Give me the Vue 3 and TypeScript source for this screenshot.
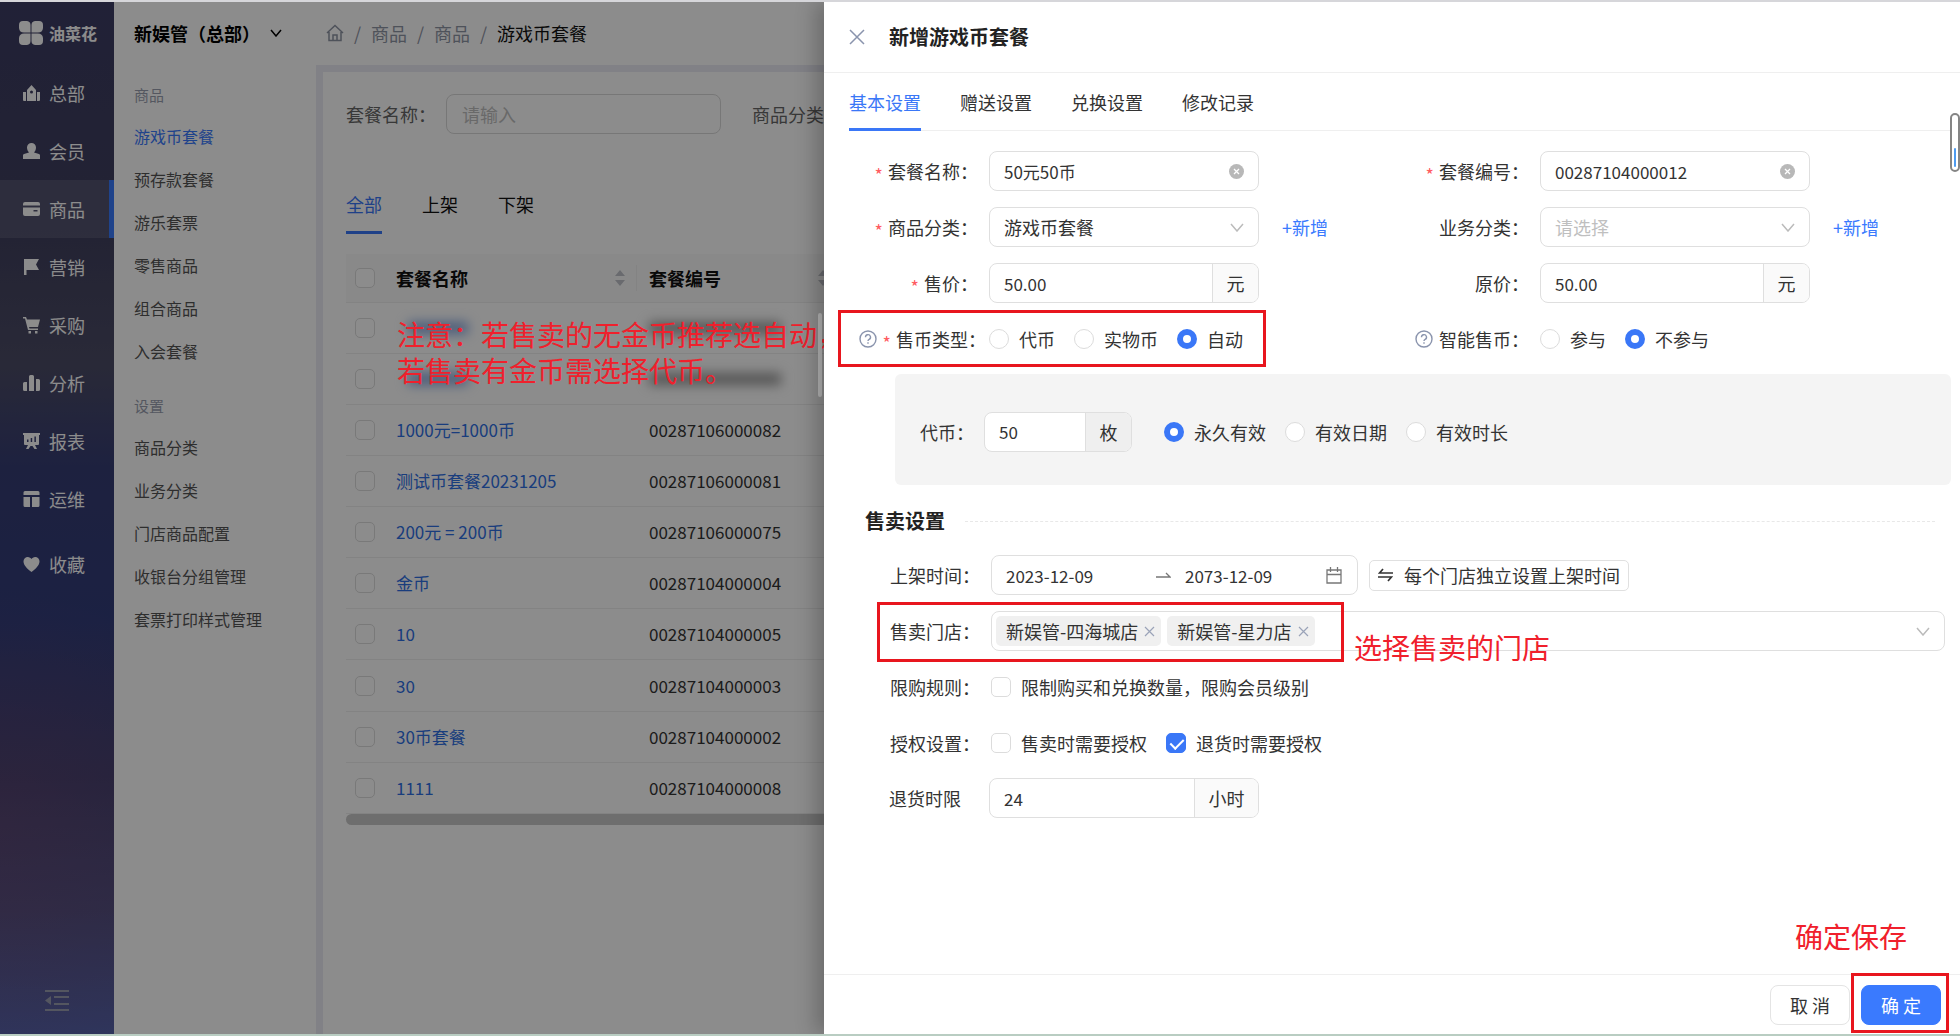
<script setup lang="ts">
import { ref } from 'vue'

interface NavItem { label: string; icon: string }
interface Row { name: string; code: string; masked?: boolean }

const nav: NavItem[] = [
  { label: '总部', icon: 'M0 7h3v9H1a1 1 0 0 1-1-1zM14 7h3v8a1 1 0 0 1-1 1h-2zM4 16V5l4.500-5L13 5v11zM8.500 5.500a1.500 1.500 0 1 0 0 3 1.500 1.500 0 0 0 0-3z' },
  { label: '会员', icon: 'M8.500 0a4.500 4.500 0 0 1 4.500 4.500c0 2-1 4-2 5L16 11a1.500 1.500 0 0 1 1 1.500V16H0v-3.500A1.500 1.500 0 0 1 1 11l5-1.500c-1-1-2-3-2-5A4.500 4.500 0 0 1 8.500 0z' },
  { label: '商品', icon: 'M2 1h13a2 2 0 0 1 2 2v1.500H0V3a2 2 0 0 1 2-2zM0 6.500h17V13a2 2 0 0 1-2 2H2a2 2 0 0 1-2-2zM10.500 9v1.500h4V9z' },
  { label: '营销', icon: 'M1 0h15l-3 5.500 3 5.500H3.500v5H1z' },
  { label: '采购', icon: 'M0 0h3l1 2.500h13L15 10H6l.5 1.500H15V13H5L2 1.500H0zM5.500 14h2.500v2.500H5.500zM12 14h2.500v2.500H12z' },
  { label: '分析', icon: 'M0 8.500a1.500 1.500 0 0 1 1.500-1.500H4v9H1.500A1.500 1.500 0 0 1 0 14.500zM6 1.500A1.500 1.500 0 0 1 7.500 0h2A1.500 1.500 0 0 1 11 1.500V16H6zM13 4h2.500A1.500 1.500 0 0 1 17 5.500v9a1.500 1.500 0 0 1-1.500 1.500H13z' },
  { label: '报表', icon: 'M0 0h17v2h-1v9a1 1 0 0 1-1 1h-3l2 4h-2.500L9.500 13h-2l-2 3H3l2-4H2a1 1 0 0 1-1-1V2H0zM4 6.500V9h1.500V6.500zM7.700 5V9h1.500V5zM11.400 3.500V9h1.500V3.500z' },
  { label: '运维', icon: 'M2 0h13a1.500 1.500 0 0 1 1.500 1.500V4H.5V1.500A1.500 1.500 0 0 1 2 0zM.5 6H7v10H2a1.500 1.500 0 0 1-1.500-1.500zM9 6h7.500v8.500A1.500 1.500 0 0 1 15 16H9z' },
  { label: '收藏', icon: 'M8.500 16C4 12.500.500 9.500.500 5.300A4.300 4.300 0 0 1 4.800 1C6.500 1 7.800 2 8.500 3 9.200 2 10.500 1 12.200 1a4.300 4.300 0 0 1 4.300 4.300C16.500 9.500 13 12.500 8.500 16z' },
]
const goodsMenu = ['游戏币套餐', '预存款套餐', '游乐套票', '零售商品', '组合商品', '入会套餐']
const settingMenu = ['商品分类', '业务分类', '门店商品配置', '收银台分组管理', '套票打印样式管理']
const rows: Row[] = [
  { name: '', code: '', masked: true },
  { name: '', code: '', masked: true },
  { name: '1000元=1000币', code: '00287106000082' },
  { name: '测试币套餐20231205', code: '00287106000081' },
  { name: '200元 = 200币', code: '00287106000075' },
  { name: '金币', code: '00287104000004' },
  { name: '10', code: '00287104000005' },
  { name: '30', code: '00287104000003' },
  { name: '30币套餐', code: '00287104000002' },
  { name: '1111', code: '00287104000008' },
]
const drawerTabs = ['基本设置', '赠送设置', '兑换设置', '修改记录']
const coinTypes = ['代币', '实物币', '自动']
const smartTypes = ['参与', '不参与']
const validTypes = ['永久有效', '有效日期', '有效时长']

const form = ref({
  name: '50元50币',
  code: '00287104000012',
  category: '游戏币套餐',
  biz: '',
  price: '50.00',
  origin: '50.00',
  coinType: '自动',
  smart: '不参与',
  coins: '50',
  valid: '永久有效',
  from: '2023-12-09',
  to: '2073-12-09',
  limit: false,
  authSell: false,
  authRefund: true,
  refundHours: '24',
})
const stores = ref(['新娱管-四海城店', '新娱管-星力店'])
function removeStore(s: string) {
  stores.value = stores.value.filter((x) => x !== s)
}
</script>

<template>
  <div class="app">
    <nav class="side">
      <div class="logo">
        <svg width="24" height="24" viewBox="0 0 24 24" fill="#fff">
          <path d="M4 0h4a4 4 0 0 1 3.500 4v7.500H5A5 5 0 0 1 0 7V4a4 4 0 0 1 4-4z" />
          <path d="M16 0h4a4 4 0 0 1 4 4v3a5 5 0 0 1-5 4.500h-6.500V4A4 4 0 0 1 16 0z" />
          <path d="M5 12.500h6.500V20A4 4 0 0 1 8 24H4a4 4 0 0 1-4-4v-3a5 5 0 0 1 5-4.500z" />
          <path d="M12.500 12.500H19a5 5 0 0 1 5 4.500v3a4 4 0 0 1-4 4h-4a4 4 0 0 1-3.500-4z" />
        </svg>
        <span>油菜花</span>
      </div>
      <a v-for="n in nav" :key="n.label" href="#" class="nav" :class="{ on: n.label === '商品', fav: n.label === '收藏' }">
        <svg width="17" height="17" viewBox="0 0 17 17" fill="#fff" fill-rule="evenodd"><path :d="n.icon" /></svg>
        {{ n.label }}
      </a>
      <button class="fold" aria-label="收起菜单">
        <svg width="24" height="22" viewBox="0 0 24 22" fill="#9a9db0"><path d="M0 0h24v2H0zM9 6h15v2H9zM9 13h15v2H9zM0 19h24v2H0zM6 6v9l-6-4.500z" /></svg>
      </button>
    </nav>

    <aside class="sub">
      <button class="org">新娱管（总部）
        <svg width="12" height="8" viewBox="0 0 12 8" fill="none" stroke="#000" stroke-width="1.500"><path d="M1 1l5 6 5-6" /></svg>
      </button>
      <h3>商品</h3>
      <a v-for="(m, i) in goodsMenu" :key="m" href="#" :class="{ on: i === 0 }">{{ m }}</a>
      <h3 class="later">设置</h3>
      <a v-for="m in settingMenu" :key="m" href="#">{{ m }}</a>
    </aside>

    <main class="main">
      <header class="crumbs">
        <svg width="18" height="18" viewBox="0 0 18 18" fill="none" stroke="#8f95a5" stroke-width="1.500"><path d="M1 9l8-7.500L17 9M3 8v8.500h12V8M7 16v-5h4v5" /></svg>
        <i>/</i><a href="#">商品</a><i>/</i><a href="#">商品</a><i>/</i><b>游戏币套餐</b>
      </header>
      <section class="content">
        <div class="search">
          <label for="q">套餐名称：</label>
          <input id="q" type="text" placeholder="请输入" />
          <span class="cat">商品分类：</span>
        </div>
        <div class="tabs list-tabs">
          <button class="on">全部</button><button>上架</button><button>下架</button>
        </div>
        <table>
          <thead>
            <tr>
              <th class="c0"><input type="checkbox" aria-label="全选" /></th>
              <th class="c1"><div>套餐名称<svg width="10" height="16" viewBox="0 0 10 16" fill="#bfc2c9"><path d="M5 0l5 6H0zM5 16l5-6H0z" /></svg></div></th>
              <th class="c2"><div>套餐编号<svg width="10" height="16" viewBox="0 0 10 16" fill="#bfc2c9"><path d="M5 0l5 6H0zM5 16l5-6H0z" /></svg></div></th>
            </tr>
          </thead>
          <tbody>
            <tr v-for="(r, i) in rows" :key="i">
              <td class="c0"><input type="checkbox" aria-label="选择" /></td>
              <td class="c1"><span v-if="r.masked" class="smudge blue"></span><a v-else href="#">{{ r.name }}</a></td>
              <td class="c2"><span v-if="r.masked" class="smudge dark"></span><template v-else>{{ r.code }}</template></td>
            </tr>
          </tbody>
        </table>
        <div class="hbar"></div>
      </section>
    </main>

    <div class="mask"></div>
    <p class="note note-list">注意：若售卖的无金币推荐选自动，<br />若售卖有金币需选择代币。</p>
    <div class="vbar"></div>

    <section class="drawer" role="dialog" aria-labelledby="dt">
      <header class="dhead">
        <button class="close" aria-label="关闭">
          <svg width="16" height="16" viewBox="0 0 16 16" fill="none" stroke="#8a94ad" stroke-width="1.500"><path d="M1 1l14 14M15 1L1 15" /></svg>
        </button>
        <h2 id="dt">新增游戏币套餐</h2>
      </header>

      <div class="dbody">
        <div class="tabs dtabs">
          <button v-for="(t, i) in drawerTabs" :key="t" :class="{ on: i === 0 }">{{ t }}</button>
        </div>

        <div class="grid">
          <div class="row">
            <label class="lab" for="f1"><em>*</em>套餐名称：</label>
            <div class="ctl"><input id="f1" v-model="form.name" type="text" />
              <button class="ic" aria-label="清除" @click="form.name = ''"><svg width="15" height="15" viewBox="0 0 15 15"><circle cx="7.500" cy="7.500" r="7.500" fill="#b8b8b8" /><path d="M5 5l5 5M10 5l-5 5" stroke="#fff" stroke-width="1.300" /></svg></button>
            </div>
          </div>
          <div class="row">
            <label class="lab" for="f2"><em>*</em>套餐编号：</label>
            <div class="ctl"><input id="f2" v-model="form.code" type="text" />
              <button class="ic" aria-label="清除" @click="form.code = ''"><svg width="15" height="15" viewBox="0 0 15 15"><circle cx="7.500" cy="7.500" r="7.500" fill="#b8b8b8" /><path d="M5 5l5 5M10 5l-5 5" stroke="#fff" stroke-width="1.300" /></svg></button>
            </div>
          </div>
          <div class="row">
            <label class="lab" for="f3"><em>*</em>商品分类：</label>
            <div class="ctl"><select id="f3" v-model="form.category"><option>游戏币套餐</option></select>
              <svg class="chev" width="14" height="9" viewBox="0 0 14 9"><path d="M1 1l6 7 6-7" /></svg>
            </div>
            <a href="#" class="add">+新增</a>
          </div>
          <div class="row">
            <label class="lab" for="f4">业务分类：</label>
            <div class="ctl"><select id="f4" v-model="form.biz" class="empty"><option value="">请选择</option></select>
              <svg class="chev" width="14" height="9" viewBox="0 0 14 9"><path d="M1 1l6 7 6-7" /></svg>
            </div>
            <a href="#" class="add">+新增</a>
          </div>
          <div class="row">
            <label class="lab" for="f5"><em>*</em>售价：</label>
            <div class="ctl"><input id="f5" v-model="form.price" type="text" /><span class="unit">元</span></div>
          </div>
          <div class="row">
            <label class="lab" for="f6">原价：</label>
            <div class="ctl"><input id="f6" v-model="form.origin" type="text" /><span class="unit">元</span></div>
          </div>
          <div class="row marked">
            <span class="lab tight">
              <svg class="q" width="18" height="18" viewBox="0 0 18 18" fill="none" stroke="#8a94ad" stroke-width="1.400"><circle cx="9" cy="9" r="8" /><path d="M6.500 7.200a2.500 2.500 0 1 1 3.600 2.200c-.8.4-1.100.8-1.100 1.600M9 12.200v1.500" /></svg>
              <em>*</em>售币类型：</span>
            <label v-for="c in coinTypes" :key="c" class="opt"><input v-model="form.coinType" type="radio" name="coin" :value="c" />{{ c }}</label>
            <div class="frame f-coin"></div>
          </div>
          <div class="row">
            <span class="lab">
              <svg class="q" width="18" height="18" viewBox="0 0 18 18" fill="none" stroke="#8a94ad" stroke-width="1.400"><circle cx="9" cy="9" r="8" /><path d="M6.500 7.200a2.500 2.500 0 1 1 3.600 2.200c-.8.4-1.100.8-1.100 1.600M9 12.200v1.500" /></svg>
              智能售币：</span>
            <label v-for="c in smartTypes" :key="c" class="opt"><input v-model="form.smart" type="radio" name="smart" :value="c" />{{ c }}</label>
          </div>
        </div>

        <div class="panel">
          <label for="f7">代币：</label>
          <div class="ctl small"><input id="f7" v-model="form.coins" type="text" /><span class="unit">枚</span></div>
          <label v-for="c in validTypes" :key="c" class="opt"><input v-model="form.valid" type="radio" name="valid" :value="c" />{{ c }}</label>
        </div>

        <div class="sect"><h4>售卖设置</h4><span></span></div>

        <div class="sell">
          <div class="row">
            <label class="lab" for="f8">上架时间：</label>
            <div class="ctl range">
              <input id="f8" v-model="form.from" type="text" />
              <svg width="15" height="6" viewBox="0 0 15 6" fill="none" stroke="#777" stroke-width="1.300"><path d="M0 5h14L10 1" /></svg>
              <input v-model="form.to" type="text" aria-label="结束时间" />
              <svg width="16" height="17" viewBox="0 0 16 17" fill="none" stroke="#777" stroke-width="1.300"><path d="M1 3h14v13H1zM1 7.500h14M4.500 0v5M11.500 0v5" /></svg>
            </div>
            <button class="mini">
              <svg width="15" height="14" viewBox="0 0 15 14" fill="none" stroke="#333" stroke-width="1.700"><path d="M15 5H1.500L5 1M0 9h13.500L10 13" /></svg>
              每个门店独立设置上架时间
            </button>
          </div>
          <div class="row marked">
            <label class="lab" for="f9">售卖门店：</label>
            <div class="ctl stores">
              <span v-for="s in stores" :key="s" class="tag">{{ s }}
                <button :aria-label="'移除' + s" @click="removeStore(s)"><svg width="11" height="11" viewBox="0 0 11 11" stroke="#9aa3b8" stroke-width="1.200"><path d="M1 1l9 9M10 1l-9 9" /></svg></button>
              </span>
              <input id="f9" type="text" />
              <svg class="chev" width="14" height="9" viewBox="0 0 14 9"><path d="M1 1l6 7 6-7" /></svg>
            </div>
            <div class="frame f-store"></div>
            <p class="note note-store">选择售卖的门店</p>
          </div>
          <div class="row">
            <span class="lab">限购规则：</span>
            <label class="opt"><input v-model="form.limit" type="checkbox" />限制购买和兑换数量，限购会员级别</label>
          </div>
          <div class="row">
            <span class="lab">授权设置：</span>
            <label class="opt"><input v-model="form.authSell" type="checkbox" />售卖时需要授权</label>
            <label class="opt"><input v-model="form.authRefund" type="checkbox" />退货时需要授权</label>
          </div>
        </div>
        <div class="row last">
          <label class="lab bare" for="f10">退货时限</label>
          <div class="ctl"><input id="f10" v-model="form.refundHours" type="text" /><span class="unit wide">小时</span></div>
        </div>
      </div>

      <footer class="dfoot">
        <button class="btn">取 消</button>
        <button class="btn primary">确 定</button>
        <div class="frame f-ok"></div>
        <p class="note note-ok">确定保存</p>
      </footer>
      <div class="thumb"><span></span></div>
    </section>
  </div>
</template>

<style>
body { margin: 0; }
</style>

<style scoped>
.app {
  position: relative;
  display: flex;
  height: 100vh;
  box-sizing: border-box;
  border-top: 2px solid #d6d6da;
  border-bottom: 2px solid #b9cdc2;
  overflow: hidden;
  background: #fff;
  color: #333;
  font-family: "Noto Sans CJK SC", "Noto Sans", sans-serif;
  font-size: 18px;
  line-height: 26px;
}
.app * { box-sizing: border-box; }
button, input, select { font: inherit; color: inherit; }
button { border: 0; background: none; padding: 0; cursor: pointer; }
a { color: inherit; text-decoration: none; }
h2, h3, h4, p { margin: 0; }
svg { flex: none; display: block; }

/* primary navigation */
.side {
  flex: none;
  width: 114px;
  display: flex;
  flex-direction: column;
  background:
    radial-gradient(circle at 0 80%, rgba(120, 70, 110, .35), transparent 240px),
    linear-gradient(180deg, #3c3c64 0, #40405f 22%, #4c4c66 35%, #363d74 45%, #323c7a 60%, #40406f 75%, #505082 88%, #5661a8 100%);
  color: #fff;
}
.logo { display: flex; align-items: center; gap: 6px; height: 62px; padding-left: 19px; font-size: 16px; font-weight: 700; }
.nav { display: flex; align-items: center; gap: 9px; height: 58px; padding-left: 23px; }
.nav.on { background: rgba(255, 255, 255, .1); border-right: 5px solid #3a7afe; }
.nav.fav { margin-top: 7px; }
.fold { margin: auto auto 22px; }

/* secondary menu */
.sub { flex: none; width: 202px; padding-left: 20px; display: flex; flex-direction: column; font-size: 16px; color: #555; }
.org { display: flex; align-items: center; height: 62px; margin-bottom: 11px; font-size: 18px; font-weight: 700; color: #000; white-space: nowrap; }
.org svg { margin-left: 10px; }
.sub h3 { font-size: 15px; font-weight: 400; line-height: 40px; color: #9a9fb0; }
.sub .later { margin-top: 13px; }
.sub a { line-height: 43px; }
.sub a.on { color: #3a7afe; }

/* list page */
.main { flex: 1; min-width: 0; background: #ebebf5; padding-left: 7px; }
.crumbs { display: flex; align-items: center; height: 63px; margin-left: -7px; padding: 0 0 2px 10px; background: #fff; color: #8f95a5; }
.crumbs i { width: 27px; text-align: center; font-style: normal; }
.crumbs b { font-weight: 400; color: #111; }
.content { margin-top: 7px; height: 100%; background: #fff; padding: 22px 0 0 23px; }
.search { display: flex; align-items: center; color: #666; white-space: nowrap; }
.search input { width: 275px; height: 40px; margin: 0 31px 0 10px; border: 1px solid #d9d9d9; border-radius: 8px; padding: 0 15px; background: none; }
input::placeholder { color: #bfbfbf; }
.tabs { display: flex; }
.tabs button { position: relative; color: #333; }
.tabs button.on { color: #3a77f7; }
.tabs button.on::after { content: ""; position: absolute; left: 0; right: 0; bottom: 0; height: 3px; background: #3a77f7; }
.list-tabs { gap: 40px; height: 56px; margin-top: 44px; }
.list-tabs button { color: #111; padding-bottom: 4px; }
table { width: 100%; height: 560px; margin-top: 20px; border-collapse: collapse; table-layout: fixed; font-size: 17px; }
th { height: 48px; font-size: 18px; font-weight: 700; text-align: left; background: #fafafa; color: #111; }
th, td { padding: 0; border-bottom: 1px solid #efefef; }
td { height: 51px; color: #333; }
td a { color: #2f6fe4; }
.c0 { width: 50px; }
.c0 input { display: block; margin-left: 9px; }
.c1 { width: 241px; }
th.c1 div { display: flex; align-items: center; justify-content: space-between; padding-right: 11px; border-right: 1px solid #efefef; }
th.c2 div { display: flex; align-items: center; gap: 97px; }
.c2 { padding-left: 12px; }
.smudge { display: block; height: 12px; filter: blur(6px); }
.smudge.blue { width: 60px; margin-left: 12px; background: #85a5de; }
.smudge.dark { width: 132px; background: #9a9a9a; }
.hbar { height: 11px; border-radius: 6px 0 0 6px; background: #c9c9c9; }

.mask { position: absolute; inset: 0; background: rgba(0, 0, 0, .45); }
.note { color: #f0202c; font-size: 28px; line-height: 36px; white-space: nowrap; }
.note-list { position: absolute; left: 397px; top: 314px; }
.vbar { position: absolute; left: 818px; top: 311px; width: 4px; height: 84px; background: #b4b4b4; border-radius: 2px; }

/* drawer */
.drawer { position: absolute; left: 824px; right: 0; top: 0; bottom: 0; display: flex; flex-direction: column; background: #fff; box-shadow: -8px 0 20px rgba(0, 0, 0, .24); }
.dhead { display: flex; align-items: center; gap: 24px; height: 71px; padding: 0 25px; border-bottom: 1px solid #efefef; }
.dhead h2 { font-size: 20px; line-height: 30px; color: #222; }
.close { display: flex; }
.dbody { flex: 1; padding: 0 9px 0 25px; }
.dtabs { gap: 39px; height: 58px; border-bottom: 1px solid #efefef; }
.dtabs button.on::after { bottom: -1px; }
.grid { display: grid; grid-template-columns: 1fr 1fr; gap: 16px 0; padding-top: 20px; }
.row { display: flex; align-items: center; height: 40px; white-space: nowrap; }
.marked { position: relative; }
.lab { flex: none; width: 140px; padding-right: 11px; display: flex; align-items: center; justify-content: flex-end; }
.lab.tight { padding-right: 3px; }
.lab.bare { padding-right: 28px; }
.lab em { font-style: normal; color: #ff5a5f; padding: 6px 5px 0 0; line-height: 20px; }
.q { margin-right: 6px; }
.ctl { flex: 0 1 270px; min-width: 0; height: 40px; position: relative; display: flex; align-items: center; border: 1px solid #dfdfdf; border-radius: 8px; background: #fff; overflow: hidden; }
.ctl input, .ctl select { flex: 1; min-width: 0; width: 100%; height: 100%; border: 0; outline: 0; background: none; padding: 0 0 0 14px; appearance: none; font-size: 17px; }
.ctl select { font-size: 18px; }
.ctl select.empty { color: #bfbfbf; }
.ic { display: flex; margin-right: 14px; }
.chev { position: absolute; right: 14px; top: 15px; fill: none; stroke: #bbb; stroke-width: 1.5; pointer-events: none; }
.unit { flex: none; width: 46px; line-height: 38px; text-align: center; background: #fafafa; border-left: 1px solid #dfdfdf; }
.unit.wide { width: 64px; }
.add { color: #3a7afe; margin-left: 23px; }
.opt { display: flex; align-items: center; gap: 10px; margin-right: 19px; }
input[type="radio"], input[type="checkbox"] { flex: none; appearance: none; width: 20px; height: 20px; margin-top: 0; margin-bottom: 0; border: 1px solid #dcdcdc; background: #fff; }
.opt input { margin: 0; }
input[type="radio"] { border-radius: 50%; }
input[type="radio"]:checked { border: 6px solid #3a77f7; }
input[type="checkbox"] { border-radius: 5px; position: relative; }
input[type="checkbox"]:checked { background: #3a77f7; border-color: #3a77f7; }
input[type="checkbox"]:checked::after { content: ""; position: absolute; left: 6px; top: 2px; width: 6px; height: 11px; border: solid #fff; border-width: 0 2px 2px 0; transform: rotate(45deg); }

.panel { display: flex; align-items: center; height: 111px; margin: 15px 0 0 46px; padding: 4px 0 0 25px; background: #f4f4f4; border-radius: 6px; white-space: nowrap; }
.ctl.small { flex-basis: 148px; margin: 0 32px 0 10px; }
.panel .unit { background: #efefef; }
.sect { display: flex; align-items: center; gap: 20px; margin: 21px 16px 0; }
.sect h4 { font-size: 20px; line-height: 30px; color: #222; }
.sect span { flex: 1; border-top: 1px dashed #e8e8e8; }
.sell { display: flex; flex-direction: column; gap: 16px; margin: 19px 6px 15px 2px; }
.ctl.range { flex-basis: 367px; padding-right: 15px; }
.ctl.range input:first-child { flex: 0 0 164px; }
.mini { display: flex; align-items: center; gap: 11px; height: 31px; margin-left: 11px; padding: 0 8px; border: 1px solid #e0e0e0; border-radius: 5px; }
.ctl.stores { flex: 1; padding-left: 4px; gap: 6px; }
.tag { flex: none; display: flex; align-items: center; gap: 6px; height: 30px; padding: 0 6px 0 10px; background: #f0f0f0; border-radius: 5px; }
.tag button { display: flex; }

.dfoot { position: relative; display: flex; align-items: center; justify-content: flex-end; gap: 11px; height: 60px; padding: 0 19px; border-top: 1px solid #efefef; }
.btn { width: 80px; height: 40px; border: 1px solid #e4e4e4; border-radius: 8px; color: #333; }
.btn.primary { background: #3a7afe; border-color: #3a7afe; color: #fff; }

/* highlights and notes over the form */
.frame { position: absolute; border: 3px solid #e8161e; pointer-events: none; }
.f-coin { left: -11px; top: -9px; width: 428px; height: 57px; }
.f-store { left: 26px; top: -9px; width: 467px; height: 60px; }
.f-ok { right: 11px; top: -2px; width: 98px; height: 60px; }
.note-store { position: absolute; left: 503px; top: 18px; }
.note-ok { position: absolute; right: 53px; top: -57px; }
.thumb { position: absolute; right: 0; top: 111px; width: 10px; height: 59px; padding: 3px 2px; border: 2px solid #858585; border-radius: 6px; background: #fff; display: flex; align-items: flex-end; }
.thumb span { width: 100%; height: 19px; border-radius: 2px; background: #4e9bf0; }
</style>
